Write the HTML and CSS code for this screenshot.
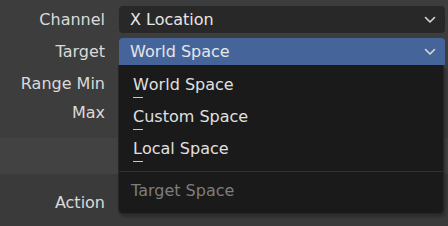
FILE: index.html
```html
<!DOCTYPE html>
<html>
<head>
<meta charset="utf-8">
<link rel="stylesheet" href="styles.css">
</head>
<body>
<div class="panel">
  <div class="row r1">
    <div class="label">Channel</div>
    <div class="field">
      <span class="ftext">X Location</span>
      <svg class="chev" width="12" height="8" viewBox="0 0 12 8"><path d="M1.5 1.5 L6 6 L10.5 1.5" fill="none" stroke="#d8d8d8" stroke-width="1.6" stroke-linecap="round" stroke-linejoin="round"/></svg>
    </div>
  </div>
  <div class="row r2">
    <div class="label">Target</div>
    <div class="field sel">
      <span class="ftext">World Space</span>
      <svg class="chev" width="12" height="8" viewBox="0 0 12 8"><path d="M1.5 1.5 L6 6 L10.5 1.5" fill="none" stroke="#d8d8d8" stroke-width="1.6" stroke-linecap="round" stroke-linejoin="round"/></svg>
    </div>
  </div>
  <div class="row r3">
    <div class="label">Range Min</div>
  </div>
  <div class="row r4">
    <div class="label">Max</div>
  </div>
  <div class="band"></div>
  <div class="lower">
    <div class="row r5">
      <div class="label">Action</div>
    </div>
  </div>
</div>
<div class="menu">
  <div class="item"><span class="u">W</span>orld Space</div>
  <div class="item"><span class="u">C</span>ustom Space</div>
  <div class="item"><span class="u">L</span>ocal Space</div>
  <div class="sep"></div>
  <div class="heading">Target Space</div>
</div>
</body>
</html>
```

FILE: styles.css
```css
html, body {
  margin: 0;
  padding: 0;
  width: 448px;
  height: 226px;
  overflow: hidden;
  background: #3d3d3d;
  font-family: "DejaVu Sans", sans-serif;
  font-size: 16px;
  color: #dadada;
}
.panel {
  padding-top: 6px;
  height: 220px;
  display: flex;
  flex-direction: column;
}
.row {
  display: flex;
  align-items: center;
  height: 27px;
}
.label {
  width: 105px;
  text-align: right;
  padding-right: 14px;
  flex: none;
  line-height: 27px;
}
.field {
  width: 326px;
  height: 27px;
  background: #282828;
  border-radius: 4px;
  display: flex;
  align-items: center;
  justify-content: space-between;
  padding: 0 9px 0 11px;
  box-sizing: border-box;
  color: #e6e6e6;
}
.field.sel {
  background: #44649a;
  border-radius: 4px 4px 0 0;
}
.r2 { margin-top: 5px; }
.r3 { margin-top: 5px; }
.r4 { margin-top: 2px; }
.band {
  margin-top: 12px;
  height: 36px;
  background: #424242;
}
.lower {
  flex: 1;
  background: #3a3a3a;
  padding-top: 15px;
}
.menu {
  position: absolute;
  left: 118px;
  top: 65px;
  width: 326px;
  height: 149px;
  background: #1a1a1a;
  border: 1px solid #262626;
  border-top: none;
  border-radius: 0 0 5px 5px;
  box-sizing: border-box;
  box-shadow: 2px 3px 3px rgba(0,0,0,0.25);
  padding-top: 4px;
}
.item {
  height: 32px;
  line-height: 32px;
  padding-left: 14px;
  color: #e0e0e0;
}
.u {
  position: relative;
  display: inline-block;
}
.u::after {
  content: "";
  position: absolute;
  left: 0;
  width: 10px;
  bottom: 3px;
  height: 1px;
  background: #c8c8c8;
}
.sep {
  margin-top: 6px;
  height: 1px;
  background: #333333;
}
.heading {
  height: 38px;
  line-height: 38px;
  padding-left: 12px;
  color: #7d7d7d;
}
```
